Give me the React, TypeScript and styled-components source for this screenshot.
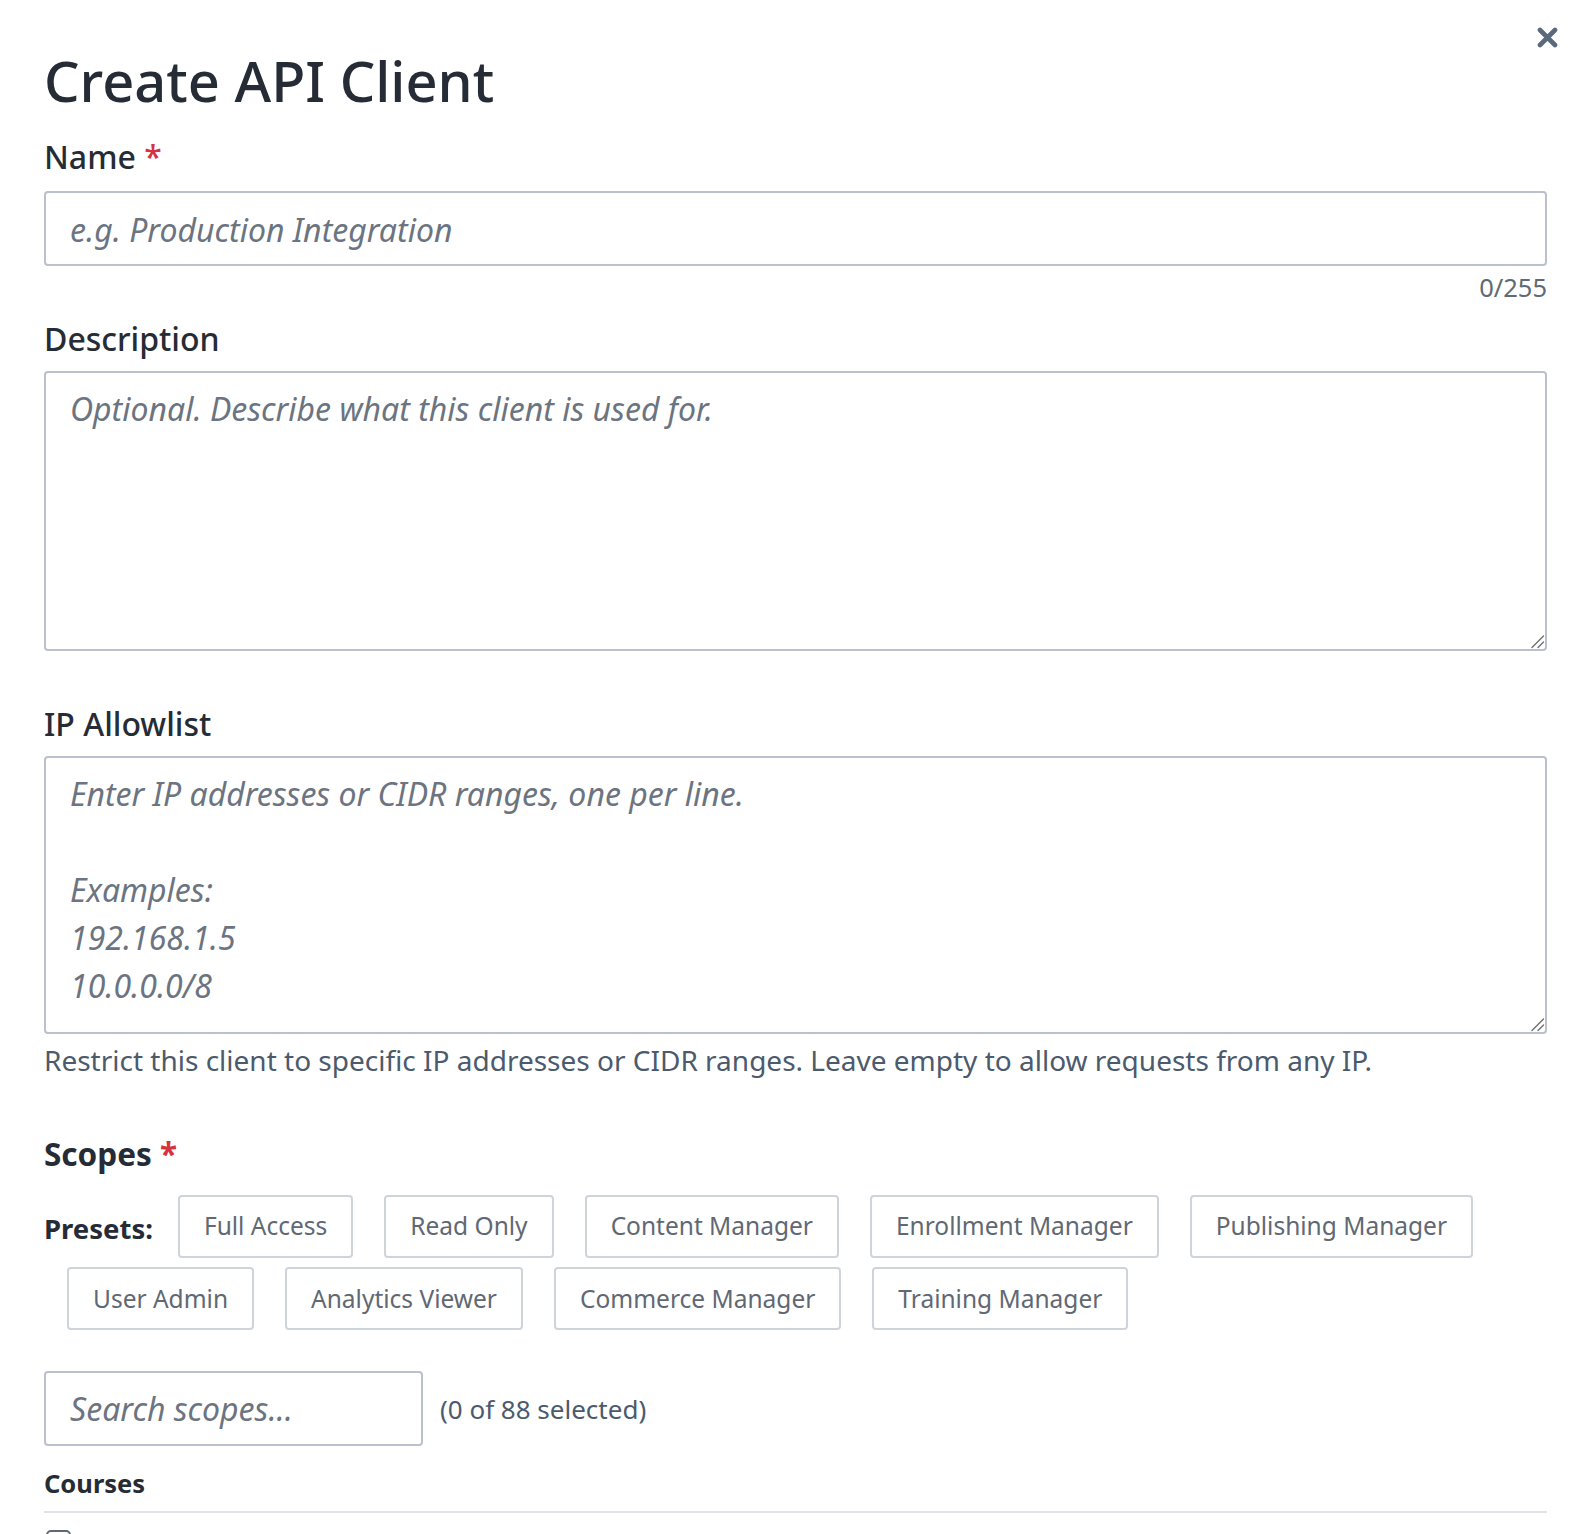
import React from "react";
import styled, { createGlobalStyle } from "styled-components";

const GlobalStyle = createGlobalStyle`
  * {
    box-sizing: border-box;
  }
  body {
    margin: 0;
    background: #ffffff;
    font-family: "Noto Sans", "Open Sans", sans-serif;
    color: #262c35;
  }
`;

const PRESETS = [
  "Full Access",
  "Read Only",
  "Content Manager",
  "Enrollment Manager",
  "Publishing Manager",
  "User Admin",
  "Analytics Viewer",
  "Commerce Manager",
  "Training Manager",
];

// resize grip for the textareas, two diagonal strokes
const GRIP =
  "data:image/svg+xml;utf8," +
  encodeURIComponent(
    '<svg xmlns="http://www.w3.org/2000/svg" width="15" height="15" viewBox="0 0 15 15"><path d="M2 13.5 L13.5 2 M8 13.5 L13.5 8" stroke="#6f6f6f" stroke-width="1.4" stroke-linecap="round"/></svg>'
  );

const Modal = styled.div`
  position: relative;
  padding: 46px 37px 0 44px;
`;

const CloseButton = styled.button`
  position: absolute;
  top: 27px;
  right: 26px;
  width: 21px;
  height: 21px;
  padding: 0;
  border: 0;
  background: none;
  color: #5a6a7c;
  display: flex;
  cursor: pointer;
`;

const Title = styled.h1`
  margin: 0;
  font-size: 56px;
  font-weight: 500;
  line-height: 68px;
  color: #262c35;
`;

const Label = styled.label<{ $mt: number; $mb?: number }>`
  display: block;
  margin: ${(p) => p.$mt}px 0 ${(p) => p.$mb ?? 13}px;
  font-size: 32px;
  font-weight: 500;
  line-height: 40px;
  color: #262c35;
`;

const Required = styled.span`
  color: #d8313f;
`;

const fieldBase = `
  display: block;
  width: 100%;
  border: 2px solid #bac1cc;
  border-radius: 4px;
  background: #ffffff;
  font-family: "Noto Sans", "Open Sans", sans-serif;
  font-size: 32px;
  line-height: 48px;
  color: #262c35;
  outline: none;
  &::placeholder {
    font-style: italic;
    color: #6b7480;
    opacity: 1;
  }
`;

const TextInput = styled.input`
  ${fieldBase}
  height: 75px;
  padding: 2px 24px 0;
`;

const TextArea = styled.textarea<{ $h: number }>`
  ${fieldBase}
  height: ${(p) => p.$h}px;
  padding: 12px 24px;
  resize: vertical;

  &::-webkit-resizer {
    background: url("${GRIP}") no-repeat right bottom;
  }
`;

const Counter = styled.div`
  margin-top: 3.5px;
  text-align: right;
  font-size: 25.5px;
  line-height: 36px;
  color: #606a75;
`;

const Hint = styled.p`
  margin: 8px 0 0;
  font-size: 28px;
  line-height: 36px;
  color: #4b5a6c;
`;

const SectionTitle = styled.h2`
  margin: 56.5px 0 0;
  font-size: 31.5px;
  font-weight: 700;
  line-height: 40px;
  color: #262c35;
`;

const PresetRow = styled.div`
  display: flex;
  flex-wrap: wrap;
  row-gap: 9.5px;
  margin-top: 20.5px;
`;

const PresetLabel = styled.span`
  height: 63px;
  padding-top: 5px;
  margin-right: 2px;
  font-size: 27.5px;
  font-weight: 700;
  line-height: 58px;
  color: #262c35;
`;

const PresetButton = styled.button`
  height: 63px;
  margin: 0 8px 0 23px;
  padding: 0 24px;
  border: 2px solid #cfd4db;
  border-radius: 4px;
  background: #ffffff;
  font-family: inherit;
  font-size: 24.5px;
  line-height: 36px;
  color: #5f6873;
  cursor: pointer;
`;

const SearchRow = styled.div`
  display: flex;
  align-items: center;
  gap: 17px;
  margin-top: 41px;
`;

const SearchInput = styled.input`
  ${fieldBase}
  width: 379px;
  height: 75px;
  padding: 0 24px;
`;

const SelectedCount = styled.span`
  font-size: 26px;
  line-height: 36px;
  color: #4b5a6c;
`;

const GroupTitle = styled.h3`
  margin: 18.5px 0 0;
  padding-bottom: 10px;
  border-bottom: 2px solid #e0e3e8;
  font-size: 25.5px;
  font-weight: 700;
  line-height: 36px;
  color: #262c35;
`;

const ScopeList = styled.div`
  display: flex;
  flex-direction: column;
  gap: 14px;
  padding-top: 17.5px;
`;

const Checkbox = styled.input`
  appearance: none;
  display: block;
  width: 25px;
  height: 25px;
  margin: 0 0 0 2px;
  border: 2px solid #5f6873;
  border-radius: 5px;
  background: #ffffff;
`;

const CloseIcon = () => (
  <svg width="21" height="21" viewBox="0 0 21 21" fill="none">
    <path
      d="M3 3 L18 18 M18 3 L3 18"
      stroke="currentColor"
      strokeWidth="4.6"
      strokeLinecap="round"
    />
  </svg>
);

export default function App() {
  return (
    <>
      <GlobalStyle />
      <Modal>
        <CloseButton aria-label="Close">
          <CloseIcon />
        </CloseButton>
        <Title>Create API Client</Title>

        <Label $mt={22.5} $mb={14} htmlFor="client-name">
          Name <Required>*</Required>
        </Label>
        <TextInput id="client-name" placeholder="e.g. Production Integration" />
        <Counter>0/255</Counter>

        <Label $mt={13.5} $mb={12.5} htmlFor="client-description">
          Description
        </Label>
        <TextArea
          id="client-description"
          $h={280}
          placeholder="Optional. Describe what this client is used for."
        />

        <Label $mt={52.5} $mb={12} htmlFor="client-ips">
          IP Allowlist
        </Label>
        <TextArea
          id="client-ips"
          $h={278}
          placeholder={
            "Enter IP addresses or CIDR ranges, one per line.\n\nExamples:\n192.168.1.5\n10.0.0.0/8"
          }
        />
        <Hint>
          Restrict this client to specific IP addresses or CIDR ranges. Leave
          empty to allow requests from any IP.
        </Hint>

        <SectionTitle>
          Scopes <Required>*</Required>
        </SectionTitle>
        <PresetRow>
          <PresetLabel>Presets:</PresetLabel>
          {PRESETS.map((name) => (
            <PresetButton key={name} type="button">
              {name}
            </PresetButton>
          ))}
        </PresetRow>

        <SearchRow>
          <SearchInput placeholder="Search scopes..." />
          <SelectedCount>(0 of 88 selected)</SelectedCount>
        </SearchRow>

        <GroupTitle>Courses</GroupTitle>
        <ScopeList>
          <Checkbox type="checkbox" aria-label="courses:read" />
        </ScopeList>
      </Modal>
    </>
  );
}
